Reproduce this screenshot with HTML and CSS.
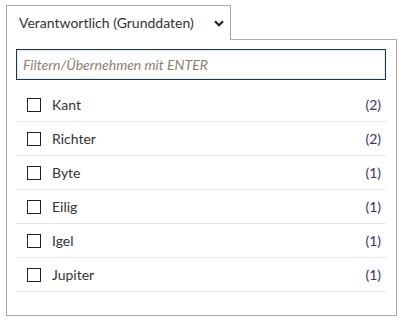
FILE: index.html
```html
<!DOCTYPE html>
<html>
<head>
  <meta charset="UTF-8">
  <title>Filter</title>
  <link rel="stylesheet" href="styles.css">
</head>
<body>
  <div class="filter">
    <div class="tab">
      <span class="tab-title">Verantwortlich (Grunddaten)</span>
      <svg class="chevron" width="10" height="7" viewBox="0 0 10 7">
        <path d="M1 1.2 L5 5.2 L9 1.2" fill="none" stroke="#222" stroke-width="2.2"/>
      </svg>
    </div>
    <div class="panel">
      <input class="search" type="text" placeholder="Filtern/Übernehmen mit ENTER">
      <ul class="list">
        <li class="item"><span class="box"></span><span class="label">Kant</span><span class="count">(2)</span></li>
        <li class="item"><span class="box"></span><span class="label">Richter</span><span class="count">(2)</span></li>
        <li class="item"><span class="box"></span><span class="label">Byte</span><span class="count">(1)</span></li>
        <li class="item"><span class="box"></span><span class="label">Eilig</span><span class="count">(1)</span></li>
        <li class="item"><span class="box"></span><span class="label">Igel</span><span class="count">(1)</span></li>
        <li class="item"><span class="box"></span><span class="label">Jupiter</span><span class="count">(1)</span></li>
      </ul>
    </div>
  </div>
</body>
</html>
```

FILE: styles.css
```css
body {
  margin: 0;
  font-family: Lato, "Open Sans", sans-serif;
  color: #333;
  background: #fff;
}
.filter {
  padding: 5px 6px 0 6px;
  width: 391px;
}
.tab {
  display: flex;
  align-items: center;
  width: 225px;
  height: 35px;
  box-sizing: border-box;
  padding: 0 6px 0 12px;
  border: 1px solid #aaa;
  border-bottom: none;
  background: #fff;
  position: relative;
  margin-bottom: -1px;
  z-index: 1;
}
.tab-title {
  flex: 1;
  font-size: 14px;
  padding-bottom: 1px;
}
.chevron {
  margin-top: 1px;
}
.panel {
  border: 1px solid #aaa;
  height: 277px;
  box-sizing: border-box;
  padding: 9px 10px 0 9px;
}
.search {
  display: block;
  width: 100%;
  height: 31px;
  box-sizing: border-box;
  border: 1px solid #1e3448;
  border-radius: 0;
  padding: 0 6px;
  margin: 0;
  font-family: Lato, sans-serif;
  font-size: 14px;
  outline: none;
  box-shadow: inset 0 0 0 1px #dff0fa;
}
.search::placeholder {
  color: #8c8070;
  font-style: italic;
}
.list {
  list-style: none;
  margin: 8px 0 0 0;
  padding: 0;
}
.item {
  display: flex;
  align-items: center;
  height: 34px;
  border-bottom: 1px solid #e6e6e6;
  box-sizing: border-box;
  font-size: 14px;
}
.box {
  width: 14px;
  height: 14px;
  box-sizing: border-box;
  border: 1.5px solid #222;
  margin: 0 11px 0 11px;
}
.label {
  flex: 1;
}
.count {
  color: #3b3560;
  margin-right: 5px;
}
```
